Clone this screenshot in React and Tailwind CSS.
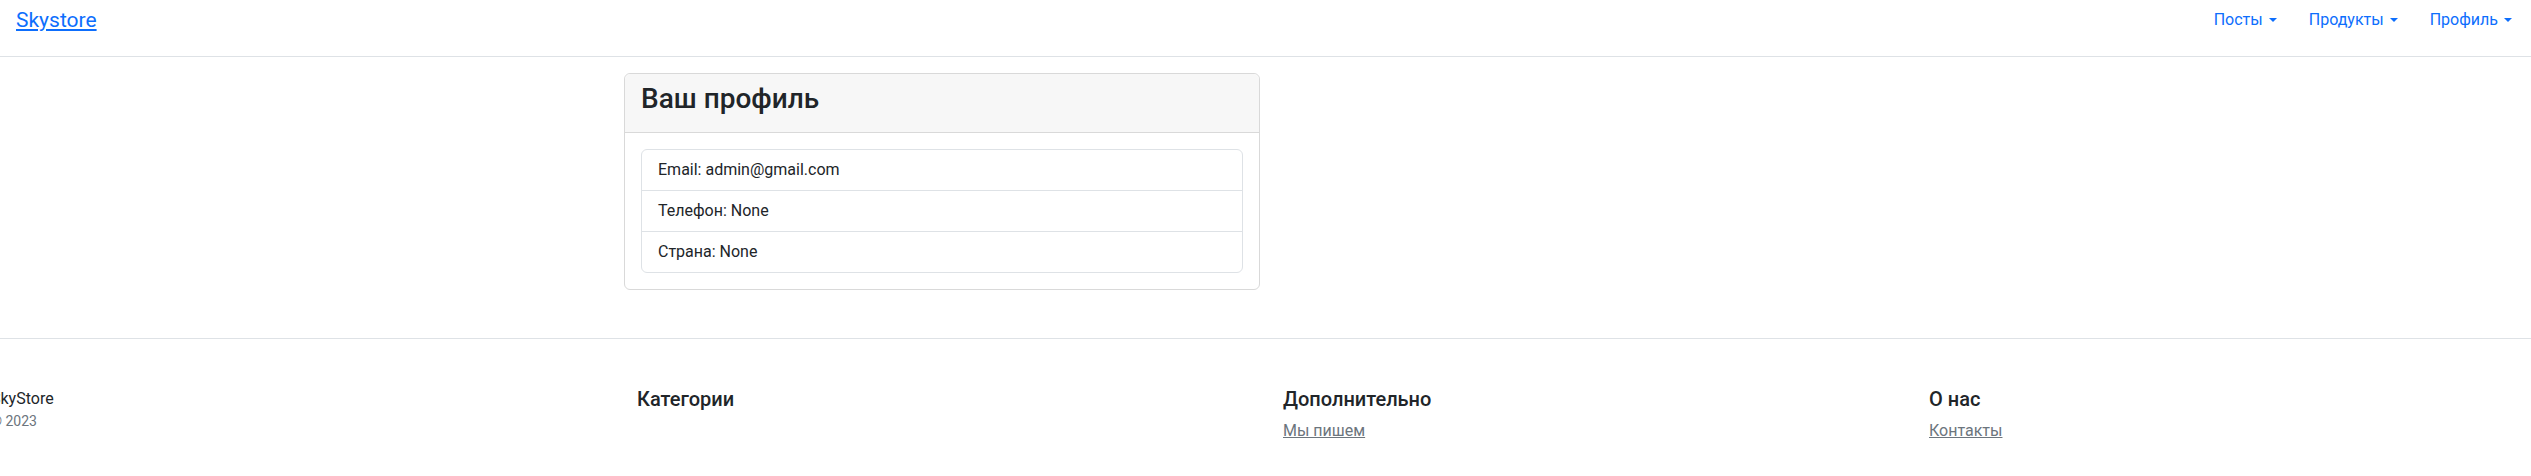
import React from "react";

const font = { fontFamily: "Roboto, 'Liberation Sans', sans-serif" };

function Caret() {
  return <span className="ml-[6px] inline-block h-0 w-0 border-x-[4.8px] border-t-[4.8px] border-x-transparent border-t-current align-middle" />;
}

function NavItem({ label }) {
  return (
    <a href="#" className="flex items-center px-4 py-2 text-base leading-6 text-[#0d6efd]">
      {label}
      <Caret />
    </a>
  );
}

function FooterCol({ title, link }) {
  return (
    <div className="w-[646px] shrink-0">
      <h5 className="mb-2 text-xl font-medium leading-[1.2] text-[#212529]">{title}</h5>
      {link ? (
        <a href="#" className="text-base leading-6 text-[#6c757d] underline">
          {link}
        </a>
      ) : null}
    </div>
  );
}

export default function App() {
  const rows = ["Email: admin@gmail.com", "Телефон: None", "Страна: None"];

  return (
    <div className="min-h-[476px] w-full overflow-hidden bg-white text-[#212529]" style={font}>
      <header className="flex items-start justify-between border-b border-[#dee2e6] pb-4">
        <div className="flex h-10 items-center pl-4">
          <a href="#" className="text-[21px] leading-[30px] text-[#0d6efd] underline">Skystore</a>
        </div>
        <nav className="flex h-10 items-center pr-[3px]">
          <NavItem label="Посты" />
          <NavItem label="Продукты" />
          <NavItem label="Профиль" />
        </nav>
      </header>

      <section className="ml-[624px] mt-4 w-[636px] rounded-md border border-[#d9d9d9]">
        <div className="rounded-t-md border-b border-[#d9d9d9] bg-[#f7f7f7] px-4 py-2">
          <h3 className="mb-2 text-[28px] font-medium leading-[1.2]">Ваш профиль</h3>
        </div>
        <div className="p-4">
          <ul className="rounded-md border border-[#dee2e6]">
            {rows.map((row, i) => (
              <li key={row} className={`px-4 py-2 text-base leading-6 ${i > 0 ? "border-t border-[#dee2e6]" : ""}`}>
                {row}
              </li>
            ))}
          </ul>
        </div>
      </section>

      <footer className="mt-12 border-t border-[#dee2e6] pt-12">
        <div className="-ml-[9px] flex">
          <div className="w-[646px] shrink-0">
            <p className="text-base leading-6">SkyStore</p>
            <small className="block text-sm leading-[21px] text-[#6c757d]">© 2023</small>
          </div>
          <FooterCol title="Категории" />
          <FooterCol title="Дополнительно" link="Мы пишем" />
          <FooterCol title="О нас" link="Контакты" />
        </div>
      </footer>
    </div>
  );
}
